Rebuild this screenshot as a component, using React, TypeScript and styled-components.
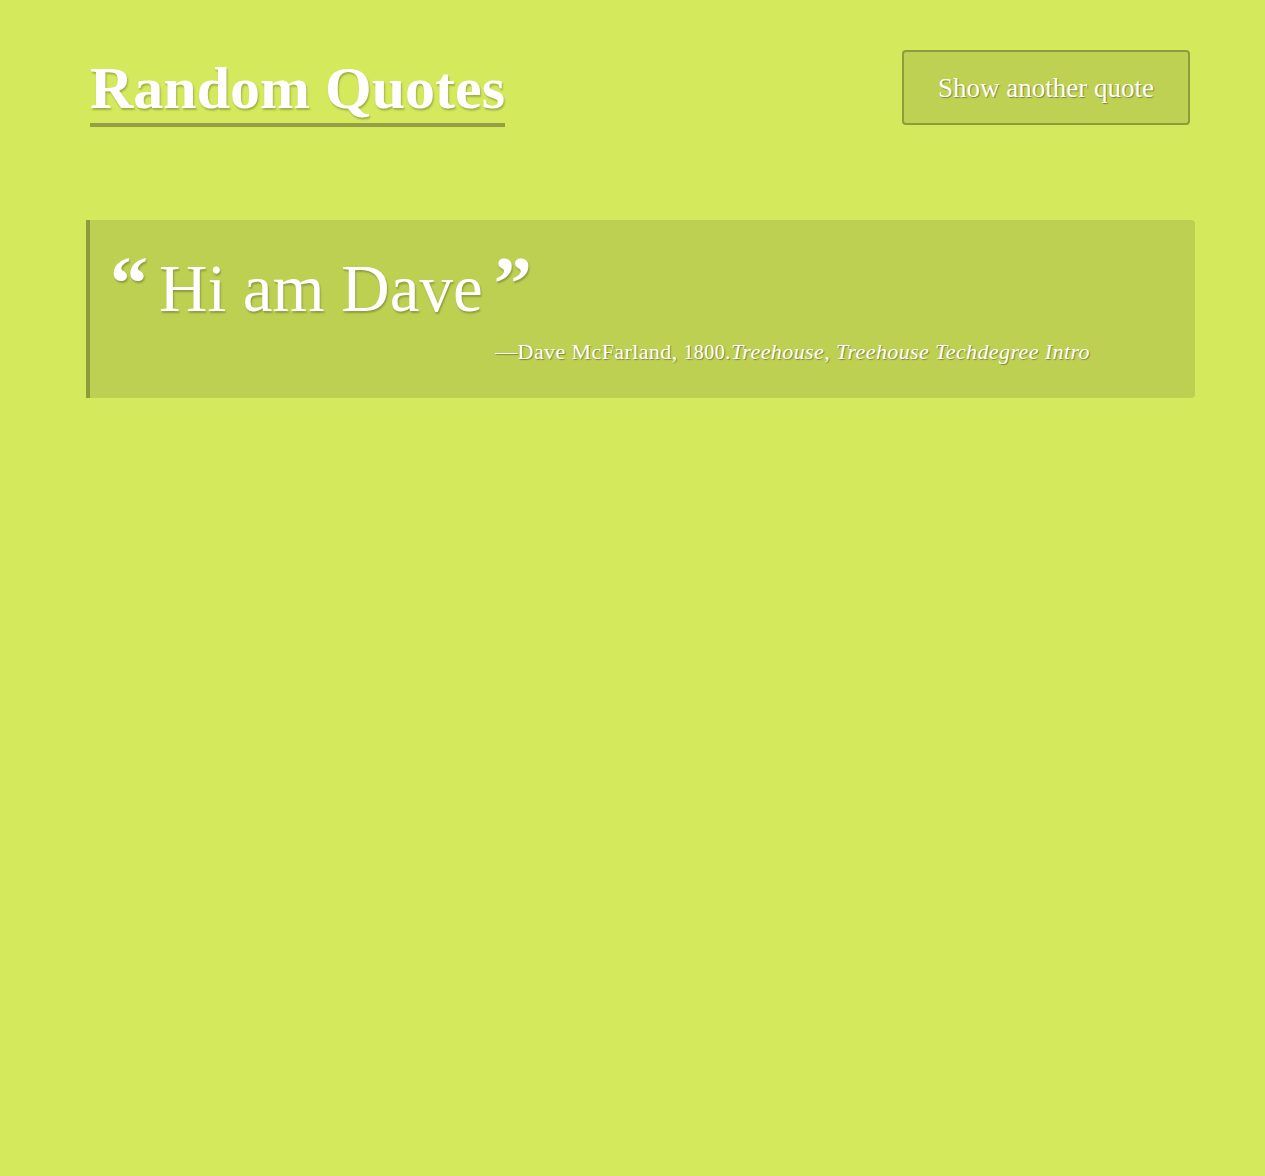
import React from "react";
import styled, { createGlobalStyle } from "styled-components";

const Global = createGlobalStyle`
  html, body { margin: 0; padding: 0; }
  body {
    background: #d5e95c;
    font-family: "Liberation Serif", "Times New Roman", serif;
    color: #ffffff;
    min-height: 1176px;
  }
`;

const Page = styled.div`
  padding: 50px 70px 0 86px;
`;

const Header = styled.header`
  display: flex;
  justify-content: space-between;
  align-items: flex-start;
`;

const Title = styled.h1`
  margin: 0 0 0 4px;
  padding: 7px 0 4px;
  font-size: 60px;
  line-height: 62px;
  font-weight: 700;
  color: #fff;
  text-shadow: 1px 2px 2px rgba(0, 0, 0, 0.25);
  border-bottom: 4px solid #959f45;
`;

const Button = styled.button`
  width: 288px;
  height: 75px;
  margin-right: 5px;
  padding-top: 3px;
  background: #bfd152;
  border: 2px solid #8f9c3c;
  border-radius: 4px;
  color: #fff;
  font-family: "Liberation Serif", "Times New Roman", serif;
  font-size: 27px;
  text-shadow: 1px 1px 1px rgba(0, 0, 0, 0.35);
  cursor: pointer;
`;

const QuoteBox = styled.section`
  margin-top: 93px;
  width: 1109px;
  height: 178px;
  box-sizing: border-box;
  background: #bed052;
  border-left: 4px solid #8f9c3c;
  border-radius: 0 4px 4px 0;
  padding: 28px 105px 0 20px;
`;

const QuoteText = styled.p`
  margin: 0;
  font-size: 67px;
  line-height: 80px;
  text-shadow: 1px 2px 2px rgba(0, 0, 0, 0.25);
  display: flex;
  align-items: flex-start;
  gap: 11px;
`;

const Mark = styled.span`
  font-weight: 700;
  font-size: 76px;
  line-height: 70px;
`;

const Source = styled.p`
  margin: 11px 0 0 0;
  text-align: right;
  font-size: 22px;
  letter-spacing: 0.4px;
  text-shadow: 1px 1px 1px rgba(0, 0, 0, 0.35);
`;

const Year = styled.span`
  font-size: 20px;
`;

const Cite = styled.i``;

export default function App() {
  return (
    <>
      <Global />
      <Page>
        <Header>
          <Title>Random Quotes</Title>
          <Button>Show another quote</Button>
        </Header>
        <QuoteBox>
          <QuoteText>
            <Mark>“</Mark>
            <span>Hi am Dave</span>
            <Mark>”</Mark>
          </QuoteText>
          <Source>
            —Dave McFarland, <Year>1800</Year>.<Cite>Treehouse</Cite>, <Cite>Treehouse Techdegree Intro</Cite>
          </Source>
        </QuoteBox>
      </Page>
    </>
  );
}
